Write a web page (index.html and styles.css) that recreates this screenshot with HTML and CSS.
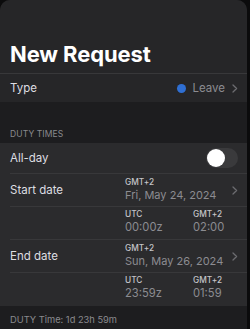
FILE: index.html
```html
<!DOCTYPE html>
<html>
<head>
<meta charset="utf-8">
<link rel="stylesheet" href="styles.css">
</head>
<body>
<div class="sheet">
  <header class="head"><h1 class="title">New Request</h1></header>
  <div class="row type-row">
    <span class="label">Type</span>
    <span class="type-value"><span class="dot"></span><span class="muted">Leave</span>
      <svg class="chev" width="6" height="9" viewBox="0 0 6 9"><path d="M1 1 L4.6 4.5 L1 8" fill="none" stroke="#6c6c70" stroke-width="1.3" stroke-linecap="round" stroke-linejoin="round"/></svg>
    </span>
  </div>
  <div class="section-label">DUTY TIMES</div>
  <div class="group">
    <div class="row allday">
      <span class="label">All-day</span>
      <span class="toggle"><span class="knob"></span></span>
    </div>
    <div class="row date-row sep">
      <span class="label">Start date</span>
      <div class="stack">
        <span class="small">GMT+2</span>
        <span class="value">Fri, May 24, 2024</span>
      </div>
      <svg class="chev" width="6" height="9" viewBox="0 0 6 9"><path d="M1 1 L4.6 4.5 L1 8" fill="none" stroke="#6c6c70" stroke-width="1.3" stroke-linecap="round" stroke-linejoin="round"/></svg>
    </div>
    <div class="row tz-row sep">
      <span></span>
      <div class="stack">
        <span class="small">UTC</span>
        <span class="value big">00:00z</span>
      </div>
      <div class="stack">
        <span class="small">GMT+2</span>
        <span class="value big">02:00</span>
      </div>
    </div>
    <div class="row date-row sep">
      <span class="label">End date</span>
      <div class="stack">
        <span class="small">GMT+2</span>
        <span class="value">Sun, May 26, 2024</span>
      </div>
      <svg class="chev" width="6" height="9" viewBox="0 0 6 9"><path d="M1 1 L4.6 4.5 L1 8" fill="none" stroke="#6c6c70" stroke-width="1.3" stroke-linecap="round" stroke-linejoin="round"/></svg>
    </div>
    <div class="row tz-row sep last">
      <span></span>
      <div class="stack">
        <span class="small">UTC</span>
        <span class="value big">23:59z</span>
      </div>
      <div class="stack">
        <span class="small">GMT+2</span>
        <span class="value big">01:59</span>
      </div>
    </div>
  </div>
  <div class="footer">DUTY Time: 1d 23h 59m</div>
</div>
</body>
</html>
```

FILE: styles.css
```css
* { box-sizing: border-box; }
html, body { margin: 0; padding: 0; }
body {
  background: #0b0b0c;
  font-family: Inter, "Noto Sans", sans-serif;
  width: 250px;
  height: 329px;
  overflow: hidden;
}
.sheet {
  width: 247px;
  height: 329px;
  background: #1d1d1f;
  border-radius: 10px 10px 0 0;
  overflow: hidden;
}
.head {
  background: #262628;
  height: 73px;
  padding: 41px 0 0 10px;
}
.title {
  margin: 0;
  font-size: 22px;
  line-height: 26px;
  font-weight: 700;
  color: #ffffff;
  letter-spacing: -0.1px;
}
.row {
  display: flex;
  align-items: center;
  justify-content: space-between;
  margin-left: 10px;
  padding-right: 9px;
}
.type-row {
  background: #262628;
  margin-left: 0;
  padding-left: 10px;
  height: 29px;
  border-top: 1px solid #38383a;
}
.label {
  font-size: 11.5px;
  color: #dedee2;
}
.type-value {
  display: flex;
  align-items: center;
}
.dot {
  width: 9px;
  height: 9px;
  border-radius: 50%;
  background: #2f6fd3;
  margin-right: 6px;
}
.muted {
  font-size: 11.5px;
  color: #8c8c91;
  margin-right: 7px;
}
.chev { display: block; }
.section-label {
  height: 41px;
  padding: 27px 0 4px 10px;
  font-size: 8.5px;
  line-height: 10px;
  color: #8a8a8e;
  letter-spacing: 0.1px;
}
.group {
  background: #2b2b2d;
}
.allday { height: 30px; }
.toggle {
  width: 32px;
  height: 20px;
  border-radius: 10px;
  background: #3a3a3c;
  padding: 1px;
  display: flex;
}
.knob {
  width: 18px;
  height: 18px;
  border-radius: 50%;
  background: #ffffff;
}
.sep { border-top: 1px solid #38383a; }
.date-row, .tz-row {
  display: grid;
  grid-template-columns: 115px 1fr 6px;
  align-items: start;
  height: 33px;
}
.date-row .label { align-self: center; }
.date-row .chev { align-self: center; margin-top: 1px; }
.tz-row { grid-template-columns: 115px 68px 1fr; }
.tz-row.last { height: 34px; }
.stack {
  display: flex;
  flex-direction: column;
  padding-top: 3px;
}
.small {
  font-size: 8.3px;
  line-height: 10px;
  font-weight: 500;
  color: #c4c4c8;
}
.value {
  font-size: 11px;
  line-height: 14px;
  color: #8c8c91;
  margin-top: 1px;
}
.value.big { font-size: 11.2px; margin-top: 1px; }
.tz-row .stack { padding-top: 2px; }
.footer {
  padding: 8px 0 0 10px;
  font-size: 9.3px;
  line-height: 11px;
  color: #8a8a8e;
}
```
